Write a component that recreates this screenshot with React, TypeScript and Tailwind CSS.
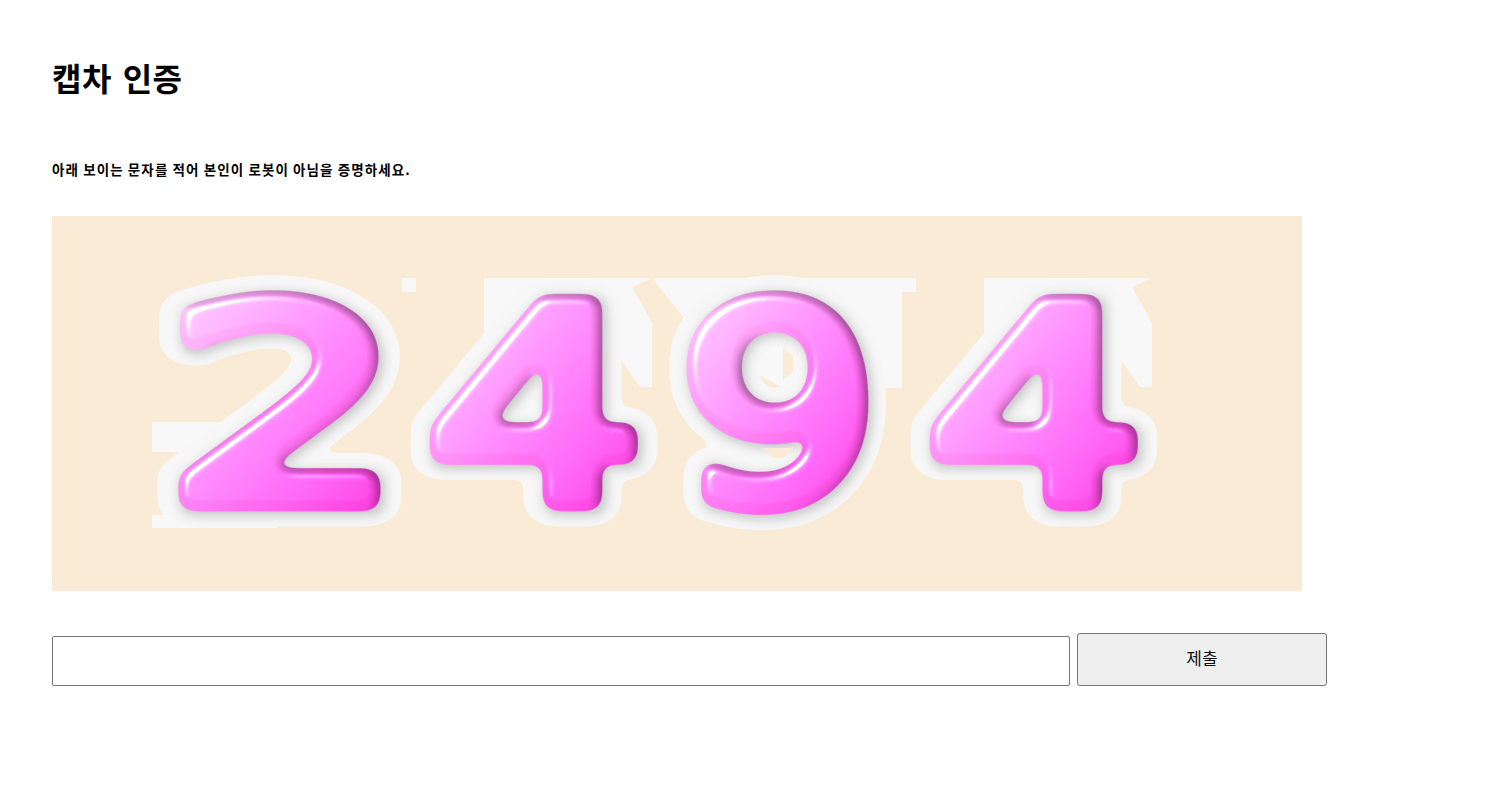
const fontKr = "font-['Noto_Sans_CJK_KR','Noto_Sans',sans-serif]"

const digits = [
  { id: "d0", ch: "2", x: 113, w: 1.39 },
  { id: "d1", ch: "4", x: 374, w: 1.27 },
  { id: "d2", ch: "9", x: 626.5, w: 1.165 },
  { id: "d3", ch: "4", x: 874, w: 1.27 },
]

function Captcha() {
  return (
    <svg width="1250" height="375" viewBox="0 0 1250 375" className="block">
      <defs>
        {digits.map((d) => (
          <text
            key={d.id}
            id={d.id}
            fontFamily="'DejaVu Sans',sans-serif"
            fontSize="270"
            strokeLinejoin="round"
            strokeLinecap="round"
            transform={`translate(${d.x} 285) scale(${d.w} 1)`}
          >
            {d.ch}
          </text>
        ))}
        <linearGradient id="gel-fill" x1="0" y1="0" x2="0.85" y2="1">
          <stop offset="0" stopColor="#ffdcfb" />
          <stop offset="0.38" stopColor="#ff97f8" />
          <stop offset="0.72" stopColor="#ff60ee" />
          <stop offset="1" stopColor="#fb2cd6" />
        </linearGradient>
        <filter id="blur" x="-30%" y="-30%" width="160%" height="160%">
          <feGaussianBlur stdDeviation="6" />
        </filter>
        <filter id="halo" x="-30%" y="-30%" width="160%" height="160%">
          <feGaussianBlur stdDeviation="5" />
          <feColorMatrix values="1 0 0 0 0 0 1 0 0 0 0 0 1 0 0 0 0 0 14 -6" />
        </filter>
        <filter id="gel" x="-20%" y="-20%" width="140%" height="140%" colorInterpolationFilters="sRGB">
          <feGaussianBlur in="SourceGraphic" stdDeviation="7" result="soft" />
          <feColorMatrix in="soft" values="1 0 0 0 0 0 1 0 0 0 0 0 1 0 0 0 0 0 14 -6.2" result="goo" />
          <feColorMatrix in="goo" values="0 0 0 0 0 0 0 0 0 0 0 0 0 0 0 0 0 0 1 0" result="gooAlpha" />
          <feGaussianBlur in="gooAlpha" stdDeviation="5" result="bump" />
          <feDiffuseLighting in="bump" surfaceScale="3" diffuseConstant="1.2" lightingColor="#ffffff" result="diffuse">
            <feDistantLight azimuth="150" elevation="56" />
          </feDiffuseLighting>
          <feComposite in="goo" in2="diffuse" operator="arithmetic" k1="0.75" k2="0.25" k3="0" k4="0" result="shaded" />
          <feSpecularLighting in="bump" surfaceScale="8" specularConstant="0.95" specularExponent="34" lightingColor="#ffffff" result="spec">
            <feDistantLight azimuth="225" elevation="42" />
          </feSpecularLighting>
          <feComposite in="spec" in2="gooAlpha" operator="in" result="specIn" />
          <feComposite in="shaded" in2="specIn" operator="arithmetic" k1="0" k2="1" k3="0.95" k4="0" />
        </filter>
      </defs>

      <g fill="#f8f8f8">
        <rect x="350" y="62" width="14" height="14" />
        <polygon points="432,62 600,62 580,71 600,107 600,171 588,171 568,142 568,214 432,214" />
        <polygon points="600,62 864,62 864,76 850,76 850,172 730,172 648,124 631,101" />
        <polygon points="932,62 1100,62 1080,71 1100,107 1100,171 1088,171 1068,142 1068,214 932,214" />
        <rect x="100" y="206" width="110" height="30" />
        <rect x="100" y="299" width="125" height="13" />
      </g>

      {digits.map((d) => (
        <g key={d.id}>
          <use href={`#${d.id}`} stroke="#f7f7f7" strokeWidth="50" fill="#f7f7f7" filter="url(#halo)" />
          <use href={`#${d.id}`} x="3" y="3" stroke="#a0a0a0" strokeWidth="22" fill="#a0a0a0" opacity="0.6" filter="url(#blur)" />
        </g>
      ))}

      <g fill="#faebd7">
        <polygon points="731,132 741,140 741,156 731,164" />
        <polygon points="711,232 741,232 731,242 721,242" />
      </g>

      {digits.map((d) => (
        <g key={d.id} filter="url(#gel)">
          <use href={`#${d.id}`} stroke="url(#gel-fill)" strokeWidth="20" fill="url(#gel-fill)" />
        </g>
      ))}
    </svg>
  )
}

export default function App() {
  return (
    <main className={`${fontKr} min-h-[808px] bg-white pl-[52px] pt-[57px] text-black`}>
      <h1 className="text-[32px] leading-[40px] font-bold tracking-[0.5px] [word-spacing:3px]">캡차 인증</h1>
      <p className="mt-[62px] text-[13.5px] leading-[20px] font-bold tracking-[1.09px]">
        아래 보이는 문자를 적어 본인이 로봇이 아님을 증명하세요.
      </p>
      <div className="mt-[37px] w-[1250px] h-[375px] bg-[#faebd7]">
        <Captcha />
      </div>
      <form className="mt-[42px] flex items-end gap-[7px]">
        <input type="text" className="w-[1018px] h-[50px] bg-white border border-[#767676] rounded-[2px] px-2 text-base" />
        <button type="button" className="w-[250px] h-[53px] bg-[#efefef] border border-[#767676] rounded-[3px] pb-[3px] text-[17px] text-[#111]">
          제출
        </button>
      </form>
    </main>
  )
}
